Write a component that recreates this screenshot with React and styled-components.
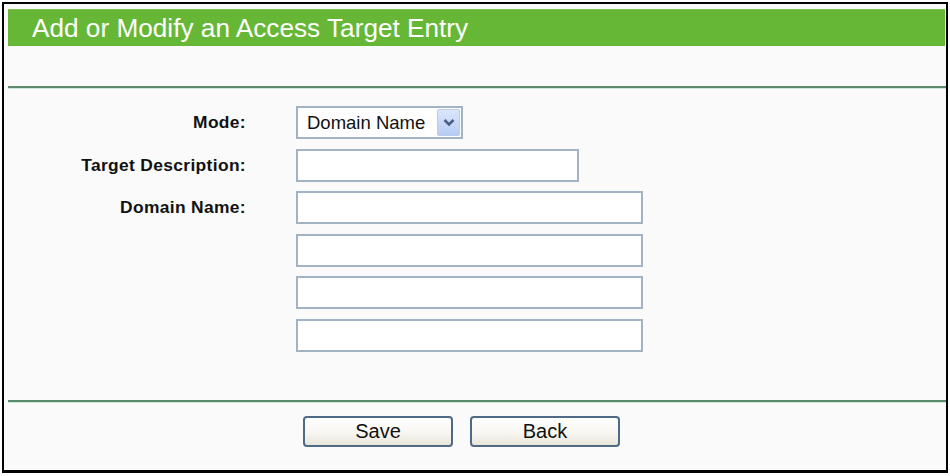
import React from 'react'
import styled, { createGlobalStyle } from 'styled-components';

const GlobalStyle = createGlobalStyle`
    html, body {
        margin: 0;
        padding: 0;
        background: #ffffff;
    }
    body {
        font-family: "Liberation Sans", Arial, sans-serif;
    }
`;

function App() {
    return (
        <Page>
            <GlobalStyle />
            <Panel>
                <Header>Add or Modify an Access Target Entry</Header>
                <Spacer />
                <Rule />
                <Form>
                    <Label>Mode:</Label>
                    <FakeSelect>
                        <span>Domain Name</span>
                        <ArrowButton>
                            <svg width="12" height="9" viewBox="0 0 12 9">
                                <path d="M1.5 2 L6 6.5 L10.5 2" fill="none" stroke="#4a5f86" strokeWidth="2.6" />
                            </svg>
                        </ArrowButton>
                    </FakeSelect>

                    <Label>Target Description:</Label>
                    <TextBox width={283} />

                    <Label>Domain Name:</Label>
                    <TextBox width={347} />
                    <Label />
                    <TextBox width={347} />
                    <Label />
                    <TextBox width={347} />
                    <Label />
                    <TextBox width={347} />
                </Form>
                <Rule />
                <ButtonRow>
                    <Button>Save</Button>
                    <Button>Back</Button>
                </ButtonRow>
            </Panel>
        </Page>
    )
}

const Page = styled.div`
    width: 950px;
    height: 476px;
    padding: 2px;
    box-sizing: border-box;
`;

const Panel = styled.div`
    width: 946px;
    height: 471px;
    box-sizing: border-box;
    border: 2px solid #000;
    border-bottom-width: 3px;
    background: #fafafa;
    padding: 5px 0 0 4px;
    display: flex;
    flex-direction: column;
`;

const Header = styled.div`
    height: 37px;
    width: 937px;
    background: #66b735;
    color: #fff;
    font-size: 26.2px;
    line-height: 36px;
    padding-left: 24px;
    box-sizing: border-box;
    border-top: 1px solid #7cc255;
`;

const Spacer = styled.div`
    height: 40px;
`;

const Rule = styled.div`
    height: 2px;
    background: #5a8b6e;
    box-shadow: 0 1px 0 #cbe8d9;
`;

const Form = styled.div`
    display: grid;
    grid-template-columns: 238px auto;
    column-gap: 50px;
    row-gap: 9.6px;
    padding: 18px 0 48px;
    justify-items: start;
    align-items: center;
`;

const Label = styled.div`
    justify-self: end;
    font-weight: bold;
    font-size: 17.4px;
    letter-spacing: 0.35px;
    color: #111;
`;

const FakeSelect = styled.div`
    width: 167px;
    height: 33px;
    box-sizing: border-box;
    border: 2px solid #a3b3c6;
    background: #fff;
    display: flex;
    align-items: center;
    justify-content: space-between;
    padding: 0 1px 0 9px;
    font-size: 18.5px;
    color: #111;
`;

const ArrowButton = styled.div`
    width: 23px;
    height: 27px;
    box-sizing: border-box;
    border: 1px solid #b9cbef;
    border-radius: 2px;
    background: linear-gradient(#dbe6fc, #b6cbf4);
    display: flex;
    align-items: center;
    justify-content: center;
`;

const TextBox = styled.input.attrs({ type: 'text' })`
    width: ${props => props.width}px;
    height: 33px;
    box-sizing: border-box;
    border: 2px solid #a3b3c6;
    background: #fff;
    margin: 0;
    padding: 0 6px;
    font-family: "Liberation Sans", Arial, sans-serif;
    font-size: 17px;
    outline: none;
`;

const ButtonRow = styled.div`
    display: flex;
    gap: 17px;
    padding: 14px 0 0 295px;
`;

const Button = styled.button`
    width: 150px;
    height: 31px;
    box-sizing: border-box;
    border: 2px solid #4f6a87;
    border-radius: 4px;
    background: linear-gradient(#ffffff 0%, #f7f6f1 55%, #e8e5da 100%);
    font-family: "Liberation Sans", Arial, sans-serif;
    font-size: 20px;
    color: #111;
    padding: 0;
`;

export default App;
